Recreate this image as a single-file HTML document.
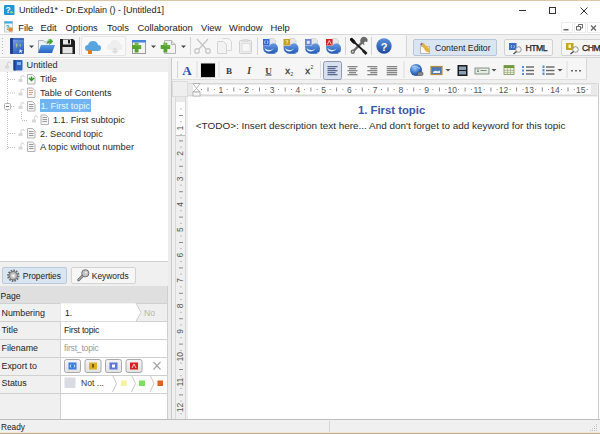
<!DOCTYPE html>
<html><head><meta charset="utf-8">
<style>
*{margin:0;padding:0;box-sizing:border-box}
html,body{width:600px;height:434px;overflow:hidden;background:#f0f0f0;font-family:"Liberation Sans",sans-serif;color:#1a1a1a}
.a{position:absolute}
.t{position:absolute;white-space:pre;line-height:1}
svg{position:absolute;overflow:visible}
</style></head><body>
<!-- window frame -->
<div class="a" style="left:0;top:0;width:600px;height:1px;background:#dcc6a8"></div>
<div class="a" style="left:0;top:1px;width:600px;height:33px;background:#fff"></div>
<div class="a" style="left:0;top:432px;width:600px;height:1px;background:#ece2d4"></div><div class="a" style="left:0;top:433px;width:600px;height:1px;background:#c8b293"></div>

<!-- title bar -->
<div class="t" style="left:19px;top:6px;font-size:9px;color:#222">Untitled1* - Dr.Explain () - [Untitled1]</div>
<div class="a" style="left:519px;top:10px;width:7px;height:1px;background:#333"></div>
<div class="a" style="left:549px;top:7px;width:7px;height:7px;border:1px solid #333"></div>
<svg style="left:580px;top:7px" width="8" height="8"><path d="M0.5 0.5L7.5 7.5M7.5 0.5L0.5 7.5" stroke="#333" stroke-width="1"/></svg>

<svg style="left:0;top:0" width="20" height="34">
<rect x="4" y="5" width="10.5" height="10" rx="1" fill="#2196d6"/>
<text x="8" y="13.3" font-family="Liberation Sans" font-weight="bold" font-size="8.5" fill="#fff" text-anchor="middle">?</text>
<circle cx="11.5" cy="12.3" r="1.3" fill="#8fe070"/>
<rect x="4.5" y="21.5" width="8" height="10.5" fill="#eef4f8" stroke="#b8c4cc" stroke-width=".8"/>
<rect x="4.5" y="21.5" width="8" height="2" fill="#3aa8e0"/>
<text x="7.5" y="30" font-family="Liberation Sans" font-weight="bold" font-size="6.5" fill="#2a9a9a" text-anchor="middle">?</text>
<circle cx="10.5" cy="29.5" r="2.3" fill="#e08a3a"/>
</svg>
<!-- menu bar -->
<div class="t" style="left:18.2px;top:23px;font-size:9.4px">File</div>
<div class="t" style="left:40.5px;top:23px;font-size:9.4px">Edit</div>
<div class="t" style="left:65.5px;top:23px;font-size:9.4px">Options</div>
<div class="t" style="left:107.0px;top:23px;font-size:9.4px">Tools</div>
<div class="t" style="left:137.5px;top:23px;font-size:9.4px">Collaboration</div>
<div class="t" style="left:201.1px;top:23px;font-size:9.4px">View</div>
<div class="t" style="left:229.1px;top:23px;font-size:9.4px">Window</div>
<div class="t" style="left:270.5px;top:23px;font-size:9.4px">Help</div>
<div class="a" style="left:560.5px;top:22px;width:12.5px;height:11px;border:1px solid #ececec"></div><div class="a" style="left:574px;top:22px;width:12px;height:11px;border:1px solid #ececec"></div><div class="a" style="left:587px;top:22px;width:14px;height:11px;border:1px solid #ececec"></div>

<!-- main toolbar band -->
<div class="a" style="left:0;top:34px;width:600px;height:1px;background:#d9d9d9"></div>
<div class="a" style="left:0;top:35px;width:600px;height:22px;background:#f1f1f1"></div>
<div class="a" style="left:0;top:57px;width:600px;height:1px;background:#dadada"></div>


<!-- toolbar 1 box -->
<div class="a" style="left:0;top:35px;width:407px;height:22px;background:#f6f6f6;border-right:1px solid #d4d4d4;border-radius:0 2px 2px 0"></div>
<div class="a" style="left:81px;top:36px;width:45px;height:20px;background:#f9f9f9;border:1px solid #e6e6e6;border-radius:2px"></div>
<!-- content editor button -->
<div class="a" style="left:413px;top:39px;width:84px;height:17px;background:#d9e5f1;border:1px solid #b5c7d9;border-radius:2px"></div>
<div class="t" style="left:435px;top:44px;font-size:8.7px;color:#222">Content Editor</div>
<div class="a" style="left:504px;top:39px;width:49px;height:17px;background:#f5f5f5;border:1px solid #d2d2d2;border-radius:2px"></div>
<div class="t" style="left:525.5px;top:44px;font-size:8.7px;color:#222;letter-spacing:-0.5px;-webkit-text-stroke:0.25px #222">HTML</div>
<div class="a" style="left:561px;top:39px;width:49px;height:17px;background:#f5f5f5;border:1px solid #d2d2d2;border-radius:2px"></div>
<div class="t" style="left:582px;top:44px;font-size:8.7px;color:#222;letter-spacing:-0.5px;-webkit-text-stroke:0.25px #222">CHM</div>

<!-- left tree panel -->
<div class="a" style="left:0;top:58px;width:168px;height:204px;background:#fff"></div>
<div class="a" style="left:0;top:59px;width:168px;height:13px;background:#efefef"></div>
<div class="a" style="left:39.5px;top:99.4px;width:51.2px;height:13px;background:#6fb3f2"></div>
<div class="t" style="left:26.5px;top:61px;font-size:9.2px;color:#2a2a2a">Untitled</div>
<div class="t" style="left:40px;top:75px;font-size:9.1px;color:#2a2a2a">Title</div>
<div class="t" style="left:40px;top:88.5px;font-size:9.2px;color:#2a2a2a">Table of Contents</div>
<div class="t" style="left:40.5px;top:102px;font-size:9.1px;color:#eef6fe">1. First topic</div>
<div class="t" style="left:53px;top:115.5px;font-size:9.1px;color:#2a2a2a">1.1. First subtopic</div>
<div class="t" style="left:40px;top:129.5px;font-size:9.1px;color:#2a2a2a">2. Second topic</div>
<div class="t" style="left:40px;top:142.5px;font-size:9.3px;color:#2a2a2a">A topic without number</div>
<svg style="left:0;top:0" width="170" height="160">
<g stroke="#bdbdbd" stroke-width="1" stroke-dasharray="1 1" fill="none">
<path d="M7.5 72v77"/>
<path d="M8 79.5h7M8 93h7M11 106.5h4M8 133.5h7M8 147.5h7"/>
<path d="M21.5 112v8M22 120.5h6"/>
</g>
<rect x="4.5" y="103.5" width="6" height="6" rx="1" fill="#fff" stroke="#b4b4b4" stroke-width="1"/>
<rect x="6" y="106" width="3" height="1" fill="#777"/>
<!-- locks -->
<g id="lk" fill="none" stroke="#cfcfcf" stroke-width="1"><rect x="5" y="65.5" width="4" height="3" fill="#d8d8d8" stroke="none"/><path d="M7.5 65.5v-2a1.5 1.5 0 0 1 3 0"/></g>
<use href="#lk" x="13.5" y="13.5"/><use href="#lk" x="13.5" y="27"/><use href="#lk" x="13.5" y="40.5"/><use href="#lk" x="27" y="54"/><use href="#lk" x="13.5" y="67.5"/><use href="#lk" x="13.5" y="81"/>
<!-- book -->
<rect x="13.5" y="60" width="9" height="10.5" rx="1" fill="#2e64c0"/>
<rect x="13.5" y="60" width="2" height="10.5" fill="#173e88"/>
<rect x="17" y="62" width="4" height="3" fill="#7fb0ee"/>
<!-- doc icons -->
<g id="doc"><path d="M27.5 74.5h5l2.5 2.5v7h-7.5z" fill="#f6f6f6" stroke="#b4b4b4"/></g>
<path d="M29 78l2.5 2.5 2.5-2.5M31.5 76.5v4" stroke="#2f9a2f" stroke-width="1.5" fill="none"/>
<use href="#doc" y="13.5"/>
<path d="M29 90.5h4M29 92.5h4M29 94.5h3" stroke="#e0a080" stroke-width="1"/>
<use href="#doc" y="27"/>
<path d="M29 104.5h4.5M29 106.5h4.5M29 108.5h4.5" stroke="#9a9a9a" stroke-width="1"/>
<use href="#doc" x="13.5" y="40.5"/>
<path d="M42.5 117.5h4.5M42.5 119.5h4.5M42.5 121.5h4.5" stroke="#9a9a9a" stroke-width="1"/>
<use href="#doc" y="54"/>
<path d="M29 131.5h4.5M29 133.5h4.5M29 135.5h4.5" stroke="#9a9a9a" stroke-width="1"/>
<use href="#doc" y="67.5"/>
<path d="M29 144.5h4.5M29 146.5h4.5M29 148.5h4.5" stroke="#9a9a9a" stroke-width="1"/>
</svg>
<!-- properties panel -->
<div class="a" style="left:0;top:261px;width:168px;height:1px;background:#d2d2d2"></div>
<div class="a" style="left:1.5px;top:267px;width:65.5px;height:17px;background:#d9e5f1;border:1px solid #b9cadb;border-radius:2px"></div>
<div class="a" style="left:71px;top:267px;width:65px;height:17px;background:#f6f6f6;border:1px solid #d3d3d3;border-radius:2px"></div>
<div class="t" style="left:22.8px;top:272.3px;font-size:8.4px;color:#222">Properties</div>
<div class="t" style="left:91.8px;top:272.3px;font-size:8.4px;color:#222">Keywords</div>
<div class="a" style="left:0;top:286px;width:168px;height:17px;background:#dfdfdf"></div>
<div class="t" style="left:0.5px;top:292px;font-size:8.6px;color:#222">Page</div>
<div class="a" style="left:0;top:303px;width:60px;height:116px;background:#f0f0f0"></div>
<div class="a" style="left:60px;top:303px;width:107px;height:116px;background:#fff"></div>
<div class="a" style="left:59.5px;top:303px;width:1px;height:116px;background:#d0d0d0"></div>
<div class="a" style="left:167px;top:286px;width:1px;height:133px;background:#cfcfcf"></div>
<div class="a" style="left:0;top:302.5px;width:167px;height:1px;background:#d0d0d0"></div>
<div class="a" style="left:0;top:321.3px;width:167px;height:1px;background:#d0d0d0"></div>
<div class="a" style="left:0;top:339.1px;width:167px;height:1px;background:#d0d0d0"></div>
<div class="a" style="left:0;top:356.9px;width:167px;height:1px;background:#d0d0d0"></div>
<div class="a" style="left:0;top:374.7px;width:167px;height:1px;background:#d0d0d0"></div>
<div class="a" style="left:0;top:392.5px;width:167px;height:1px;background:#d0d0d0"></div>
<div class="t" style="left:1.5px;top:309.0px;font-size:8.9px;color:#222">Numbering</div>
<div class="t" style="left:1.5px;top:326.2px;font-size:8.9px;color:#222">Title</div>
<div class="t" style="left:1.5px;top:344.0px;font-size:8.9px;color:#222">Filename</div>
<div class="t" style="left:1.5px;top:361.6px;font-size:8.9px;color:#222">Export to</div>
<div class="t" style="left:1.5px;top:379.4px;font-size:8.9px;color:#222">Status</div>

<div class="a" style="left:136px;top:303.5px;width:31px;height:17.8px;background:#efefef"></div>
<svg style="left:0;top:0" width="170" height="420"><path d="M60.5 303.3h75.5l5 9-5 9h-75.5z" fill="#fff"/><path d="M136 303.3l5 9-5 9" fill="none" stroke="#d0d0d0" stroke-width="1"/></svg>
<div class="t" style="left:144px;top:309px;font-size:8.6px;color:#b4b4b4">No</div>
<div class="t" style="left:65px;top:309px;font-size:8.6px;color:#222">1.</div>
<div class="t" style="left:64px;top:326.2px;font-size:8.6px;color:#222;letter-spacing:-0.2px">First topic</div>
<div class="t" style="left:64px;top:344px;font-size:8.6px;color:#9a9a9a;letter-spacing:-0.2px">first_topic</div>
<div class="t" style="left:81px;top:379.4px;font-size:8.6px;color:#333">Not ...</div>
<svg style="left:0;top:0" width="170" height="420">
<defs><linearGradient id="gBtn" x1="0" y1="0" x2="0" y2="1"><stop offset="0" stop-color="#f4f4f4"/><stop offset="1" stop-color="#e2e2e2"/></linearGradient></defs>
<g stroke="#a9a9a9" stroke-width="1" fill="url(#gBtn)">
<rect x="64.5" y="359.5" width="16" height="13" rx="2"/>
<rect x="85" y="359.5" width="16" height="13" rx="2"/>
<rect x="105.5" y="359.5" width="16" height="13" rx="2"/>
<rect x="126" y="359.5" width="16" height="13" rx="2"/>
</g>
<rect x="68.5" y="362.5" width="8" height="7" fill="#3a7be0"/><path d="M71 364.5l-1 1.5 1 1.5M74 364.5l1 1.5-1 1.5" stroke="#fff" stroke-width=".8" fill="none"/>
<rect x="89" y="362.5" width="8" height="7" fill="#d8b020"/><rect x="92" y="364" width="2" height="3.5" fill="#7a5a00"/>
<rect x="109.5" y="362.5" width="8" height="7" fill="#5a78d8"/><rect x="112" y="364.5" width="3" height="3" fill="#fff"/>
<rect x="130" y="362.5" width="8" height="7" fill="#d82020"/><path d="M132 368l2-4 2 4" stroke="#fff" stroke-width=".8" fill="none"/>
<path d="M153.5 362l7 7.5M160.5 362l-7 7.5" stroke="#a0a0a0" stroke-width="1.1"/>
<rect x="64.5" y="377.5" width="11" height="10.5" fill="#d9dce2"/>
<g fill="none" stroke="#c8c8c8" stroke-width="1"><path d="M112.5 375l4 8.5-4 8.5M131.5 375l4 8.5-4 8.5M150 375l4 8.5-4 8.5"/></g>
<rect x="121" y="380.5" width="5.5" height="5.5" fill="#f7f2a0"/>
<rect x="139" y="380.5" width="6" height="5.5" fill="#7de060"/>
<rect x="157.5" y="380.5" width="5.5" height="5.5" fill="#e2621a"/>
<!-- tab icons -->
<circle cx="13.3" cy="275.7" r="5.3" fill="none" stroke="#6a6a6a" stroke-width="1.8" stroke-dasharray="1.6 1.1"/>
<circle cx="13.3" cy="275.7" r="4.2" fill="#b4b4b4" stroke="#6a6a6a" stroke-width="1"/>
<circle cx="13.3" cy="275.7" r="2.2" fill="#d8d8d8"/>
<circle cx="13.3" cy="275.7" r="0.9" fill="#fff"/>
<path d="M78.5 280l5-5" stroke="#6a6a6a" stroke-width="2.6" stroke-linecap="round"/>
<path d="M78.5 280l5-5" stroke="#d0d0d0" stroke-width="1" stroke-linecap="round"/>
<circle cx="85.3" cy="273.3" r="3.6" fill="#c4c4c4" stroke="#6e6e6e" stroke-width="1"/>
<circle cx="86" cy="272.6" r="1" fill="#f0f0f0"/>
</svg>
<!-- editor -->
<div class="a" style="left:168px;top:58px;width:4px;height:362px;background:#ececec"></div>
<div class="a" style="left:171px;top:57px;width:429px;height:363px;background:#f0f0f0;border-left:1px solid #c9c9c9;border-top:1px solid #d6d6d6"></div>
<div class="a" style="left:172px;top:58px;width:415px;height:22px;background:#f6f6f6;border-bottom:1px solid #dedede;border-right:1px solid #d8d8d8"></div>
<div class="a" style="left:177px;top:61px;width:1px;height:17px;background:#d6d6d6"></div>
<!-- ruler corner -->
<div class="a" style="left:172px;top:81px;width:16px;height:16px;background:#efefef;border:1px solid #dcdcdc"></div>
<!-- h ruler -->
<div class="a" style="left:188px;top:83px;width:409px;height:13px;background:#e9e9e9;border-top:1px solid #d9d9d9;border-bottom:1px solid #d9d9d9"></div>
<div class="a" style="left:193px;top:85px;width:398px;height:9px;background:#fff"></div>
<!-- v ruler -->
<div class="a" style="left:175px;top:97px;width:11px;height:322px;background:#e9e9e9;border-left:1px solid #d9d9d9;border-right:1px solid #d9d9d9"></div>
<div class="a" style="left:176px;top:102px;width:9px;height:33px;background:#fdfdfd"></div><div class="a" style="left:176px;top:135px;width:9px;height:1px;background:#bdbdbd"></div><div class="a" style="left:176px;top:136px;width:9px;height:283px;background:#efefef"></div>
<!-- page -->
<div class="a" style="left:188px;top:97px;width:410px;height:322px;background:#fff"></div>
<div class="a" style="left:598px;top:83px;width:2px;height:337px;background:#fcfcfc;border-left:1px solid #cdcdcd"></div>
<div class="t" style="left:358px;top:104.5px;font-size:11.3px;font-weight:bold;color:#3b55ab">1. First topic</div>
<div class="t" style="left:195.8px;top:121px;font-size:9.95px;color:#2a2a2a">&lt;TODO&gt;: Insert description text here... And don't forget to add keyword for this topic</div>
<!-- editor toolbar icons -->
<svg style="left:0;top:0" width="600" height="100">
<text x="187" y="75" font-family="Liberation Serif" font-weight="bold" font-size="13" fill="#2a4cad" text-anchor="middle">A</text>
<rect x="196.5" y="61" width="1" height="17" fill="#dcdcdc"/>
<rect x="200.5" y="63" width="15" height="14.7" fill="#000" stroke="#e8e8e8" stroke-width="1"/>
<rect x="218.5" y="61" width="1" height="17" fill="#dcdcdc"/>
<text x="229" y="74" font-family="Liberation Serif" font-weight="bold" font-size="9" fill="#3a3a3a" text-anchor="middle">B</text>
<text x="249" y="74" font-family="Liberation Serif" font-weight="bold" font-style="italic" font-size="9.5" fill="#3a3a3a" text-anchor="middle">I</text>
<text x="268.5" y="73.5" font-family="Liberation Serif" font-weight="bold" font-size="9" fill="#3a3a3a" text-anchor="middle">U</text>
<rect x="265.5" y="74.5" width="6" height="1" fill="#3a3a3a"/>
<text x="287.5" y="74" font-family="Liberation Sans" font-size="9.5" fill="#3a3a3a" text-anchor="middle" stroke="#3a3a3a" stroke-width=".3">x</text>
<text x="292" y="76" font-family="Liberation Sans" font-size="5" fill="#3a3a3a" text-anchor="middle">2</text>
<text x="307.5" y="74" font-family="Liberation Sans" font-size="9.5" fill="#3a3a3a" text-anchor="middle" stroke="#3a3a3a" stroke-width=".3">x</text>
<text x="312" y="69" font-family="Liberation Sans" font-size="5" fill="#3a3a3a" text-anchor="middle">2</text>
<rect x="320" y="61" width="1" height="17" fill="#dcdcdc"/>
<rect x="323.5" y="61.5" width="18" height="18" rx="2" fill="#d9e1ed" stroke="#8e9ab2" stroke-width="1"/>
<rect x="327.5" y="66" width="10" height="1.3" fill="#5a6a94"/>
<rect x="327.5" y="68" width="8" height="1.3" fill="#5a6a94"/>
<rect x="327.5" y="70" width="10" height="1.3" fill="#5a6a94"/>
<rect x="327.5" y="72" width="8" height="1.3" fill="#5a6a94"/>
<rect x="327.5" y="74" width="10" height="1.3" fill="#5a6a94"/>
<rect x="347.5" y="66" width="10" height="1.3" fill="#858585"/>
<rect x="349.0" y="68" width="7" height="1.3" fill="#858585"/>
<rect x="347.5" y="70" width="10" height="1.3" fill="#858585"/>
<rect x="349.0" y="72" width="7" height="1.3" fill="#858585"/>
<rect x="347.5" y="74" width="10" height="1.3" fill="#858585"/>
<rect x="367.3" y="66" width="10" height="1.3" fill="#858585"/>
<rect x="370.3" y="68" width="7" height="1.3" fill="#858585"/>
<rect x="367.3" y="70" width="10" height="1.3" fill="#858585"/>
<rect x="370.3" y="72" width="7" height="1.3" fill="#858585"/>
<rect x="367.3" y="74" width="10" height="1.3" fill="#858585"/>
<rect x="386.7" y="66" width="10.5" height="1.3" fill="#858585"/>
<rect x="386.7" y="68" width="10.5" height="1.3" fill="#858585"/>
<rect x="386.7" y="70" width="10.5" height="1.3" fill="#858585"/>
<rect x="386.7" y="72" width="10.5" height="1.3" fill="#858585"/>
<rect x="386.7" y="74" width="10.5" height="1.3" fill="#858585"/>
<rect x="403.5" y="61" width="1" height="17" fill="#dcdcdc"/>
<circle cx="416" cy="70" r="6" fill="url(#gGlobe)"/>
<path d="M412 67q3-2 5 0t3 1" stroke="#b8d8f8" stroke-width=".8" fill="none"/>
<rect x="417.5" y="72" width="5.5" height="3.5" rx="1.5" fill="#8a8a8a" stroke="#444" stroke-width=".6"/>
<rect x="431" y="66.5" width="11" height="8" fill="#4a7ab8" stroke="#c08a3a" stroke-width="1.2"/>
<path d="M433 72q2-2 4-1t3-1v3h-7z" fill="#e8f0f8"/>
<path d="M445.5 69h5l-2.5 2.5z" fill="#555"/>
<rect x="457.5" y="65" width="10" height="11" fill="#1c1c1c"/>
<rect x="459" y="66.5" width="7" height="3.5" fill="#8aa0b4"/>
<rect x="459" y="71" width="7" height="3.5" fill="#8aa0b4"/>
<rect x="475" y="68" width="14" height="6" fill="#e4ece4" stroke="#6a7a6a" stroke-width=".8"/>
<path d="M477 70h2M477 71.5h2M480.5 70.5h6" stroke="#667766" stroke-width=".8"/>
<path d="M491.5 69h5l-2.5 2.5z" fill="#555"/>
<rect x="504" y="65.5" width="10" height="9" fill="#e9eedc" stroke="#7a9050" stroke-width=".8"/>
<rect x="504" y="65.5" width="10" height="2.5" fill="#6f9a3a"/>
<path d="M504 70.5h10M504 72.5h10M507.5 68v6.5M510.5 68v6.5" stroke="#9aa880" stroke-width=".6"/>
<rect x="522" y="66" width="2" height="2" fill="#4a90e0"/><rect x="522" y="69.5" width="2" height="2" fill="#4a90e0"/><rect x="522" y="73" width="2" height="2" fill="#4a90e0"/>
<rect x="526" y="66.3" width="8" height="1.4" fill="#666"/><rect x="526" y="69.8" width="8" height="1.4" fill="#666"/><rect x="526" y="73.3" width="8" height="1.4" fill="#666"/>
<rect x="542.5" y="65.5" width="2" height="2.5" fill="#4a90e0"/><rect x="542.5" y="69" width="2" height="2.5" fill="#4a90e0"/><rect x="542.5" y="72.5" width="2" height="2.5" fill="#4a90e0"/>
<rect x="546" y="66.3" width="8.5" height="1.4" fill="#666"/><rect x="546" y="69.8" width="8.5" height="1.4" fill="#666"/><rect x="546" y="73.3" width="8.5" height="1.4" fill="#666"/>
<path d="M557.5 69h5l-2.5 2.5z" fill="#555"/>
<rect x="566.5" y="61" width="1" height="17" fill="#dcdcdc"/>
<rect x="571" y="70" width="2" height="1.5" fill="#666"/><rect x="575" y="70" width="2" height="1.5" fill="#666"/><rect x="579" y="70" width="2" height="1.5" fill="#666"/>
</svg>
<!-- rulers -->
<svg style="left:0;top:0" width="600" height="434">
<path d="M193 83.5h7l-3.5 5 3.5 3.5h-7l3.5-3.5z" fill="#fff" stroke="#a4a4a4" stroke-width=".8"/><rect x="193" y="92" width="7" height="4" fill="#fff" stroke="#a4a4a4" stroke-width=".8"/>
<rect x="201.0" y="89" width="1" height="1" fill="#8a8a8a"/>
<rect x="207.5" y="87.5" width="1" height="4" fill="#8a8a8a"/>
<rect x="213.9" y="89" width="1" height="1" fill="#8a8a8a"/>
<rect x="226.7" y="89" width="1" height="1" fill="#8a8a8a"/>
<rect x="233.3" y="87.5" width="1" height="4" fill="#8a8a8a"/>
<rect x="239.6" y="89" width="1" height="1" fill="#8a8a8a"/>
<text x="220.8" y="92.5" font-family="Liberation Sans" font-size="8.5" fill="#555" text-anchor="middle">1</text>
<rect x="252.4" y="89" width="1" height="1" fill="#8a8a8a"/>
<rect x="259.0" y="87.5" width="1" height="4" fill="#8a8a8a"/>
<rect x="265.3" y="89" width="1" height="1" fill="#8a8a8a"/>
<text x="246.5" y="92.5" font-family="Liberation Sans" font-size="8.5" fill="#555" text-anchor="middle">2</text>
<rect x="278.1" y="89" width="1" height="1" fill="#8a8a8a"/>
<rect x="284.7" y="87.5" width="1" height="4" fill="#8a8a8a"/>
<rect x="291.0" y="89" width="1" height="1" fill="#8a8a8a"/>
<text x="272.2" y="92.5" font-family="Liberation Sans" font-size="8.5" fill="#555" text-anchor="middle">3</text>
<rect x="303.9" y="89" width="1" height="1" fill="#8a8a8a"/>
<rect x="310.4" y="87.5" width="1" height="4" fill="#8a8a8a"/>
<rect x="316.7" y="89" width="1" height="1" fill="#8a8a8a"/>
<text x="297.9" y="92.5" font-family="Liberation Sans" font-size="8.5" fill="#555" text-anchor="middle">4</text>
<rect x="329.6" y="89" width="1" height="1" fill="#8a8a8a"/>
<rect x="336.1" y="87.5" width="1" height="4" fill="#8a8a8a"/>
<rect x="342.4" y="89" width="1" height="1" fill="#8a8a8a"/>
<text x="323.6" y="92.5" font-family="Liberation Sans" font-size="8.5" fill="#555" text-anchor="middle">5</text>
<rect x="355.3" y="89" width="1" height="1" fill="#8a8a8a"/>
<rect x="361.8" y="87.5" width="1" height="4" fill="#8a8a8a"/>
<rect x="368.1" y="89" width="1" height="1" fill="#8a8a8a"/>
<text x="349.4" y="92.5" font-family="Liberation Sans" font-size="8.5" fill="#555" text-anchor="middle">6</text>
<rect x="381.0" y="89" width="1" height="1" fill="#8a8a8a"/>
<rect x="387.5" y="87.5" width="1" height="4" fill="#8a8a8a"/>
<rect x="393.8" y="89" width="1" height="1" fill="#8a8a8a"/>
<text x="375.1" y="92.5" font-family="Liberation Sans" font-size="8.5" fill="#555" text-anchor="middle">7</text>
<rect x="406.7" y="89" width="1" height="1" fill="#8a8a8a"/>
<rect x="413.2" y="87.5" width="1" height="4" fill="#8a8a8a"/>
<rect x="419.6" y="89" width="1" height="1" fill="#8a8a8a"/>
<text x="400.8" y="92.5" font-family="Liberation Sans" font-size="8.5" fill="#555" text-anchor="middle">8</text>
<rect x="432.4" y="89" width="1" height="1" fill="#8a8a8a"/>
<rect x="438.9" y="87.5" width="1" height="4" fill="#8a8a8a"/>
<rect x="445.3" y="89" width="1" height="1" fill="#8a8a8a"/>
<text x="426.5" y="92.5" font-family="Liberation Sans" font-size="8.5" fill="#555" text-anchor="middle">9</text>
<rect x="458.1" y="89" width="1" height="1" fill="#8a8a8a"/>
<rect x="464.6" y="87.5" width="1" height="4" fill="#8a8a8a"/>
<rect x="471.0" y="89" width="1" height="1" fill="#8a8a8a"/>
<text x="452.2" y="92.5" font-family="Liberation Sans" font-size="8.5" fill="#555" text-anchor="middle">10</text>
<rect x="483.8" y="89" width="1" height="1" fill="#8a8a8a"/>
<rect x="490.4" y="87.5" width="1" height="4" fill="#8a8a8a"/>
<rect x="496.7" y="89" width="1" height="1" fill="#8a8a8a"/>
<text x="477.9" y="92.5" font-family="Liberation Sans" font-size="8.5" fill="#555" text-anchor="middle">11</text>
<rect x="509.5" y="89" width="1" height="1" fill="#8a8a8a"/>
<rect x="516.1" y="87.5" width="1" height="4" fill="#8a8a8a"/>
<rect x="522.4" y="89" width="1" height="1" fill="#8a8a8a"/>
<text x="503.6" y="92.5" font-family="Liberation Sans" font-size="8.5" fill="#555" text-anchor="middle">12</text>
<rect x="535.2" y="89" width="1" height="1" fill="#8a8a8a"/>
<rect x="541.8" y="87.5" width="1" height="4" fill="#8a8a8a"/>
<rect x="548.1" y="89" width="1" height="1" fill="#8a8a8a"/>
<text x="529.3" y="92.5" font-family="Liberation Sans" font-size="8.5" fill="#555" text-anchor="middle">13</text>
<rect x="561.0" y="89" width="1" height="1" fill="#8a8a8a"/>
<rect x="567.5" y="87.5" width="1" height="4" fill="#8a8a8a"/>
<rect x="573.8" y="89" width="1" height="1" fill="#8a8a8a"/>
<text x="555.0" y="92.5" font-family="Liberation Sans" font-size="8.5" fill="#555" text-anchor="middle">14</text>
<rect x="586.7" y="89" width="1" height="1" fill="#8a8a8a"/>
<text x="580.7" y="92.5" font-family="Liberation Sans" font-size="8.5" fill="#555" text-anchor="middle">15</text>
<rect x="180.5" y="108.5" width="1" height="1" fill="#8a8a8a"/>
<rect x="179" y="115.0" width="4" height="1" fill="#8a8a8a"/>
<rect x="180.5" y="121.2" width="1" height="1" fill="#8a8a8a"/>
<rect x="180.5" y="133.9" width="1" height="1" fill="#8a8a8a"/>
<rect x="179" y="140.4" width="4" height="1" fill="#8a8a8a"/>
<rect x="180.5" y="146.6" width="1" height="1" fill="#8a8a8a"/>
<text transform="translate(183.3 128.1) rotate(-90)" font-family="Liberation Sans" font-size="8.5" fill="#555" text-anchor="middle">1</text>
<rect x="180.5" y="159.3" width="1" height="1" fill="#8a8a8a"/>
<rect x="179" y="165.8" width="4" height="1" fill="#8a8a8a"/>
<rect x="180.5" y="172.1" width="1" height="1" fill="#8a8a8a"/>
<text transform="translate(183.3 153.5) rotate(-90)" font-family="Liberation Sans" font-size="8.5" fill="#555" text-anchor="middle">2</text>
<rect x="180.5" y="184.7" width="1" height="1" fill="#8a8a8a"/>
<rect x="179" y="191.2" width="4" height="1" fill="#8a8a8a"/>
<rect x="180.5" y="197.4" width="1" height="1" fill="#8a8a8a"/>
<text transform="translate(183.3 178.9) rotate(-90)" font-family="Liberation Sans" font-size="8.5" fill="#555" text-anchor="middle">3</text>
<rect x="180.5" y="210.2" width="1" height="1" fill="#8a8a8a"/>
<rect x="179" y="216.6" width="4" height="1" fill="#8a8a8a"/>
<rect x="180.5" y="222.9" width="1" height="1" fill="#8a8a8a"/>
<text transform="translate(183.3 204.3) rotate(-90)" font-family="Liberation Sans" font-size="8.5" fill="#555" text-anchor="middle">4</text>
<rect x="180.5" y="235.5" width="1" height="1" fill="#8a8a8a"/>
<rect x="179" y="242.0" width="4" height="1" fill="#8a8a8a"/>
<rect x="180.5" y="248.2" width="1" height="1" fill="#8a8a8a"/>
<text transform="translate(183.3 229.7) rotate(-90)" font-family="Liberation Sans" font-size="8.5" fill="#555" text-anchor="middle">5</text>
<rect x="180.5" y="260.9" width="1" height="1" fill="#8a8a8a"/>
<rect x="179" y="267.4" width="4" height="1" fill="#8a8a8a"/>
<rect x="180.5" y="273.6" width="1" height="1" fill="#8a8a8a"/>
<text transform="translate(183.3 255.1) rotate(-90)" font-family="Liberation Sans" font-size="8.5" fill="#555" text-anchor="middle">6</text>
<rect x="180.5" y="286.4" width="1" height="1" fill="#8a8a8a"/>
<rect x="179" y="292.8" width="4" height="1" fill="#8a8a8a"/>
<rect x="180.5" y="299.1" width="1" height="1" fill="#8a8a8a"/>
<text transform="translate(183.3 280.5) rotate(-90)" font-family="Liberation Sans" font-size="8.5" fill="#555" text-anchor="middle">7</text>
<rect x="180.5" y="311.8" width="1" height="1" fill="#8a8a8a"/>
<rect x="179" y="318.2" width="4" height="1" fill="#8a8a8a"/>
<rect x="180.5" y="324.4" width="1" height="1" fill="#8a8a8a"/>
<text transform="translate(183.3 305.9) rotate(-90)" font-family="Liberation Sans" font-size="8.5" fill="#555" text-anchor="middle">8</text>
<rect x="180.5" y="337.2" width="1" height="1" fill="#8a8a8a"/>
<rect x="179" y="343.6" width="4" height="1" fill="#8a8a8a"/>
<rect x="180.5" y="349.9" width="1" height="1" fill="#8a8a8a"/>
<text transform="translate(183.3 331.3) rotate(-90)" font-family="Liberation Sans" font-size="8.5" fill="#555" text-anchor="middle">9</text>
<rect x="180.5" y="362.6" width="1" height="1" fill="#8a8a8a"/>
<rect x="179" y="369.0" width="4" height="1" fill="#8a8a8a"/>
<rect x="180.5" y="375.2" width="1" height="1" fill="#8a8a8a"/>
<text transform="translate(183.3 356.7) rotate(-90)" font-family="Liberation Sans" font-size="8.5" fill="#555" text-anchor="middle">10</text>
<rect x="180.5" y="387.9" width="1" height="1" fill="#8a8a8a"/>
<rect x="179" y="394.4" width="4" height="1" fill="#8a8a8a"/>
<rect x="180.5" y="400.6" width="1" height="1" fill="#8a8a8a"/>
<text transform="translate(183.3 382.1) rotate(-90)" font-family="Liberation Sans" font-size="8.5" fill="#555" text-anchor="middle">11</text>
<rect x="180.5" y="413.3" width="1" height="1" fill="#8a8a8a"/>
<text transform="translate(183.3 407.5) rotate(-90)" font-family="Liberation Sans" font-size="8.5" fill="#555" text-anchor="middle">12</text>
</svg>
<!-- status -->
<div class="a" style="left:0;top:419px;width:600px;height:1px;background:#bdbdbd"></div>
<svg style="left:588px;top:422px" width="12" height="11"><g fill="#c4c4c4"><rect x="8" y="2" width="1" height="1"/><rect x="6" y="4" width="1" height="1"/><rect x="8" y="4" width="1" height="1"/><rect x="4" y="6" width="1" height="1"/><rect x="6" y="6" width="1" height="1"/><rect x="8" y="6" width="1" height="1"/><rect x="2" y="8" width="1" height="1"/><rect x="4" y="8" width="1" height="1"/><rect x="6" y="8" width="1" height="1"/><rect x="8" y="8" width="1" height="1"/></g></svg>
<div class="a" style="left:329px;top:421px;width:1px;height:11px;background:#d6d6d6"></div>
<div class="t" style="left:1px;top:423px;font-size:8.3px">Ready</div>

<svg class="icons" style="left:0;top:0" width="600" height="434" viewBox="0 0 600 434">
<defs>
<linearGradient id="gBook" x1="0" y1="0" x2="0.6" y2="1"><stop offset="0" stop-color="#7eaeee"/><stop offset="1" stop-color="#2f5fc0"/></linearGradient>
<linearGradient id="gFold" x1="0" y1="0" x2="0" y2="1"><stop offset="0" stop-color="#5a9be6"/><stop offset="1" stop-color="#2563c4"/></linearGradient>
<linearGradient id="gHelp" x1="0" y1="0" x2="0" y2="1"><stop offset="0" stop-color="#5b8fd8"/><stop offset="1" stop-color="#1d4aa0"/></linearGradient>
<linearGradient id="gExp" x1="0" y1="0" x2="0" y2="1"><stop offset="0" stop-color="#6a9ee0"/><stop offset="1" stop-color="#1f57b5"/></linearGradient>
<radialGradient id="gGlobe" cx="0.4" cy="0.35" r="0.7"><stop offset="0" stop-color="#9cc8f5"/><stop offset="0.6" stop-color="#3572c8"/><stop offset="1" stop-color="#1b4592"/></radialGradient>
</defs>
<!-- grip -->
<g fill="#b8b8b8"><rect x="2" y="38" width="1" height="1"/><rect x="2" y="41" width="1" height="1"/><rect x="2" y="44" width="1" height="1"/><rect x="2" y="47" width="1" height="1"/><rect x="2" y="50" width="1" height="1"/><rect x="2" y="53" width="1" height="1"/></g>
<!-- book -->
<rect x="10" y="38" width="14" height="16" rx="1" fill="url(#gBook)"/>
<path d="M10 39q0-1 1-1h2v16h-2q-1 0-1-1z" fill="#1f3f90"/>
<path d="M13 38h10q1 0 1 1v1h-11z" fill="#2c56b0" opacity=".6"/>
<path d="M16 43l2 2-2 3z" fill="#c8d860" opacity=".7"/>
<path d="M19 45l2-1v3z" fill="#d8e070" opacity=".6"/>
<path d="M20 49l1 1.5 2-.5-1.5 1.5.5 2-1.5-1.5-1.5 1z" fill="#f0f6ff"/>
<!-- dropdown -->
<path d="M29 45.5h5l-2.5 2.5z" fill="#444"/>
<!-- folder -->
<path d="M38.5 40.5h5l1 1.5h5v10h-11z" fill="#eef2f6" stroke="#a8b4c0" stroke-width="1"/>
<path d="M38 53l3-8h14l-3 8z" fill="url(#gFold)"/>
<path d="M46.5 44.5q.5-3.5 3.5-4v-1.8l3 2.8-3 2.8v-1.8q-2 .3-3.5 2z" fill="#3d9a2e"/><circle cx="50" cy="41.3" r="2.6" fill="#4aa83a" opacity=".55"/>
<!-- floppy -->
<path d="M60 39h13l2 2v13h-15z" fill="#1e1e1e"/>
<rect x="63" y="39.5" width="8" height="5" fill="#e8e8e8"/>
<rect x="68" y="40" width="2" height="3.5" fill="#1e1e1e"/>
<rect x="62.5" y="47" width="10" height="6.5" fill="#e4e4e4"/>
<!-- sep -->
<rect x="79" y="37" width="1" height="18" fill="#d4d4d4"/>
<!-- cloud -->
<path d="M88 51q-3 0-3-3t3-3q1-4 5-4t5 4q3 0 3 3t-3 3z" fill="#58a4df"/>
<rect x="88" y="50" width="4" height="4" fill="#e27a1d"/>
<!-- gray cloud -->
<path d="M110 50q-3 0-3-3t3-3q1-4 5-4t5 4q2.5 0 2.5 3t-2.5 3z" fill="#eeeeee"/>
<path d="M113 48h4v3h2l-4 3-4-3h2z" fill="#e0e0e0"/>
<!-- window plus -->
<rect x="132.5" y="40.5" width="13" height="13" fill="#f3f3f3" stroke="#9a9a9a" stroke-width="1"/>
<rect x="132" y="40" width="14" height="2.5" fill="#4384dc"/>
<path d="M134.7 42.7h3.8v2.3h2.7v4h-2.7v3.5h-3.8v-3.5h-2.7v-4h2.7z" fill="#56a232"/>
<path d="M135.2 43.2h2.8v2.3h2.7v1h-2.7v-1h-2.8z" fill="#8fd060" opacity=".6"/>
<path d="M151 45.5h5l-2.5 2.5z" fill="#444"/>
<!-- doc plus -->
<path d="M164.5 40.5h7l4 4v9h-11z" fill="#f2f2f2" stroke="#b4b4b4"/>
<path d="M171.5 40.5v4h4" fill="#e0e0e0" stroke="#b4b4b4"/>
<path d="M163.5 42.7h3.8v2.3h2.9v4h-2.9v3.5h-3.8v-3.5h-2.8v-4h2.8z" fill="#56a232"/>
<path d="M164 43.2h2.8v2.3h2.9v1h-2.9v-1h-2.8z" fill="#8fd060" opacity=".6"/>
<path d="M181 45.5h5l-2.5 2.5z" fill="#444"/>
<rect x="190" y="37" width="1" height="18" fill="#d4d4d4"/>
<!-- scissors disabled -->
<g stroke="#c4c4c4" stroke-width="1.2" fill="none"><path d="M197 39l9 10M208 39l-9 10"/><circle cx="197" cy="51" r="2.3"/><circle cx="208" cy="51" r="2.3"/></g>
<!-- copy disabled -->
<path d="M217.5 41.5h6l3 3v9h-9z" fill="#f2f2f2" stroke="#d4d4d4"/>
<path d="M222.5 38.5h6l3 3v9h-5" fill="none" stroke="#d8d8d8"/>
<!-- paste disabled -->
<rect x="239.5" y="40.5" width="12" height="13" rx="1" fill="#ececec" stroke="#d0d0d0"/>
<rect x="242.5" y="39" width="6" height="3" fill="#dcdcdc"/>
<rect x="242" y="43.5" width="8" height="8" fill="#f7f7f7" stroke="#dadada" stroke-width=".8"/>
<rect x="257" y="37" width="1" height="18" fill="#d4d4d4"/>
<!-- export icons -->
<g id="exp1">
<path d="M269.5 38.5h4l2 2v4h-6z" fill="#e6e6e6" stroke="#c8c8c8" stroke-width=".6"/>
<path d="M263 46.5q0 7 6 7.3h4.5q4.5 0 4.5-5q0-5-4.5-5.5q-3 0-4 2.5h-6.5z" fill="url(#gExp)"/>
<path d="M264.5 48q2.5 2.5 6 2q3-.5 3.5-3.5q-1 4.5-5 5q-3.5 .3-4.5-3.5z" fill="#fff" opacity=".85"/>
<rect x="264" y="52.3" width="2" height="1" fill="#fff" opacity=".6"/><rect x="275" y="52.3" width="2" height="1" fill="#fff" opacity=".6"/>
</g>
<rect x="263" y="39" width="6.5" height="6.5" fill="#2d6ad0"/><path d="M265.3 40.5l-.8 1.7.8 1.7M267.2 40.5l.8 1.7-.8 1.7" stroke="#fff" stroke-width=".7" fill="none"/>
<use href="#exp1" x="20.5"/><rect x="283.5" y="39" width="6.5" height="6.5" fill="#c4a11c"/><path d="M285.5 40.8h2.5l-1.5 3" stroke="#fff6b0" stroke-width=".8" fill="none"/>
<use href="#exp1" x="42"/><rect x="305" y="39" width="6.5" height="6.5" fill="#6883d4"/><rect x="306.8" y="40.8" width="3" height="3" fill="#dce6ff"/>
<use href="#exp1" x="63"/><rect x="326" y="39" width="6.5" height="6.5" fill="#d42020"/><path d="M327.3 44.5l2-4 2 4" stroke="#fff" fill="none" stroke-width=".8"/>
<rect x="345" y="37" width="1" height="18" fill="#d4d4d4"/>
<!-- tools -->
<path d="M353 51.5l10-10" stroke="#6a6a6a" stroke-width="2.4" stroke-linecap="round"/>
<circle cx="352.8" cy="51.7" r="2.2" fill="#707070"/><circle cx="352.8" cy="51.7" r=".8" fill="#f0f0f0"/>
<path d="M362 43.5a3.6 3.6 0 1 1 5.2-1.6l-2.2-.4-1.2 1.6.9 1.9a3.6 3.6 0 0 1-2.7-1.5z" fill="#6a6a6a"/>
<path d="M351.5 39.5l2.5 2.5" stroke="#111" stroke-width="3.2" stroke-linecap="round"/>
<path d="M353.5 41.5l13 12" stroke="#1a1a1a" stroke-width="1.8"/>
<path d="M363 50.5l3.5 3.5" stroke="#222" stroke-width="2.8"/>
<rect x="371" y="37" width="1" height="18" fill="#d4d4d4"/>
<!-- help -->
<circle cx="384" cy="46" r="7.7" fill="url(#gHelp)"/>
<text x="384" y="50.5" font-family="Liberation Sans" font-weight="bold" font-size="11" fill="#fff" text-anchor="middle">?</text>
<!-- content editor icon -->
<path d="M420.5 46.5h9v7h-9z" fill="#fbf8f0" stroke="#a8a8b0" stroke-width=".8"/>
<path d="M421 44.5l2-2 7 7-1 3-3-1z" fill="#e2b33c"/>
<path d="M423 42.5l7 7" stroke="#f4d27a" stroke-width=".8"/>
<path d="M420 44.5l1.5-2 1.5 1.5-2 1.8z" fill="#8a6aa8"/>
<!-- html icon -->
<rect x="509" y="43" width="7.5" height="7" fill="#3a6cc4"/><path d="M511.8 45l-.8 1.5.8 1.5M513.7 45l.8 1.5-.8 1.5" stroke="#cfe0ff" stroke-width=".7" fill="none"/>
<circle cx="518.5" cy="49.5" r="2.8" fill="#f4f4f4" stroke="#8a8a8a" stroke-width=".9"/>
<path d="M516.5 51.5l-3 2.5" stroke="#444" stroke-width="1.2"/>
<rect x="566" y="43" width="7.5" height="7" fill="#c4a51e"/><rect x="568.5" y="44.5" width="2.5" height="3.5" fill="#fff3a8"/>
<circle cx="575.5" cy="49.5" r="2.8" fill="#f4f4f4" stroke="#8a8a8a" stroke-width=".9"/>
<path d="M573.5 51.5l-3 2.5" stroke="#444" stroke-width="1.2"/>
<!-- MDI controls -->
<rect x="563.5" y="29" width="5" height="1.5" fill="#666"/>
<path d="M576.5 26.5h4v3.5h-4zM578.5 26.5v-2h4v3.5h-2" fill="none" stroke="#6a6a6a" stroke-width="1"/><rect x="576.5" y="26" width="4" height="1" fill="#6a6a6a"/><rect x="578.5" y="24" width="4" height="1" fill="#6a6a6a"/>
<path d="M591 25.5l5 5M596 25.5l-5 5" stroke="#666" stroke-width="1.3"/>
</svg>
</body></html>
